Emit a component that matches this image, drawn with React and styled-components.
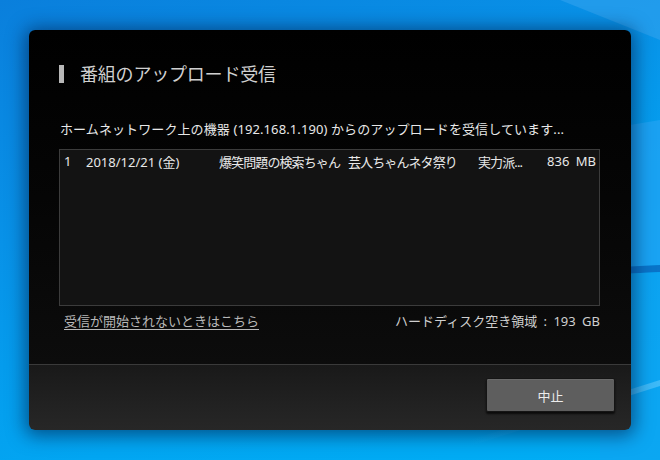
import React from "react";
import styled, { createGlobalStyle } from "styled-components";

const Global = createGlobalStyle`
  html, body { margin: 0; padding: 0; }
  body {
    width: 660px;
    height: 460px;
    overflow: hidden;
    font-family: "Noto Sans", "Noto Sans CJK JP", sans-serif;
    background: linear-gradient(160deg, #0a7fdc 0%, #0892e8 35%, #02a6f2 70%, #00aef5 100%);
  }
`;

const Desktop = styled.div`
  position: relative;
  width: 660px;
  height: 460px;
  padding: 30px 0 0 29px;
  box-sizing: border-box;
`;

const Beams = styled.svg`
  position: absolute;
  inset: 0;
  pointer-events: none;
`;

const Dialog = styled.div`
  position: relative;
  width: 602px;
  height: 400px;
  border-radius: 6px;
  overflow: hidden;
  display: flex;
  flex-direction: column;
  box-shadow: 0 2px 18px 4px rgba(0, 20, 60, 0.55);
`;

const Body = styled.div`
  height: 334px;
  box-sizing: border-box;
  padding: 35px 30px 0 30px;
  background: linear-gradient(to bottom, #000 0%, #050505 50%, #0c0c0c 100%);
  display: flex;
  flex-direction: column;
`;

const Title = styled.div`
  display: flex;
  align-items: center;
  gap: 16px;
  height: 18px;
`;

const TitleBar = styled.span`
  width: 5px;
  height: 18px;
  background: #b8b8b8;
`;

const TitleText = styled.h1`
  margin: 0;
  font-size: 18px;
  font-weight: 400;
  line-height: 18px;
  color: #d0d0d0;
  letter-spacing: -0.2px;
`;

const Message = styled.p`
  margin: 38px 0 0 1px;
  font-size: 13px;
  line-height: 16px;
  color: #e8e8e8;
  letter-spacing: 0.1px;
`;

const List = styled.div`
  margin-top: 12px;
  width: 541px;
  height: 157px;
  flex-shrink: 0;
  box-sizing: border-box;
  border: 1px solid #3c3c3c;
  background: #131313;
`;

const Row = styled.div`
  display: grid;
  grid-template-columns: 22px 133px 129px 130px 1fr auto;
  align-items: center;
  height: 20px;
  padding: 1px 3px 0 4px;
  font-size: 13px;
  color: #e8e8e8;
  white-space: nowrap;
`;

const Cell = styled.span`
  text-align: ${(p) => (p.$right ? "right" : "left")};
  word-spacing: ${(p) => (p.$wide ? "3px" : "0")};
  letter-spacing: ${(p) => (p.$tight ? "-0.9px" : "0")};
  overflow: hidden;
`;

const Bottom = styled.div`
  display: flex;
  justify-content: space-between;
  align-items: center;
  width: 541px;
  margin-top: 6px;
  padding: 0 0 0 5px;
  box-sizing: border-box;
  font-size: 13px;
  line-height: 18px;
`;

const HelpLink = styled.a`
  color: #b8b8b8;
  text-decoration: underline;
  text-underline-offset: 3px;
  cursor: pointer;
`;

const Disk = styled.span`
  color: #cfcfcf;
  word-spacing: 3px;
`;

const Footer = styled.div`
  flex: 1;
  border-top: 1px solid #3a3a3a;
  background: linear-gradient(to bottom, #191919, #272727);
  display: flex;
  justify-content: flex-end;
  align-items: flex-start;
  padding: 13px 16px 0 0;
`;

const Button = styled.button`
  width: 129px;
  height: 34px;
  background: #5e5e5e;
  border: 1px solid #151515;
  border-radius: 2px;
  box-shadow: 0 2px 2px rgba(0, 0, 0, 0.7), inset 0 1px 0 #6a6a6a;
  color: #ececec;
  font-family: "Noto Sans CJK JP", sans-serif;
  font-size: 13px;
  cursor: pointer;
`;

export default function App() {
  return (
    <>
      <Global />
      <Desktop>
        <Beams width="660" height="460" viewBox="0 0 660 460">
          <defs>
            <linearGradient id="b1" x1="0" y1="0" x2="1" y2="0">
              <stop offset="0" stopColor="#5fc8ff" stopOpacity="0" />
              <stop offset="1" stopColor="#7fd4ff" stopOpacity="0.45" />
            </linearGradient>
          </defs>
          <polygon points="560,0 660,0 660,40" fill="#3aa6f0" opacity="0.5" />
          <polygon points="600,130 660,120 660,265 620,268" fill="#1fa2f2" opacity="0.8" />
          <polygon points="600,268 660,265 660,272 600,275" fill="#0a6fc4" opacity="0.9" />
          <polygon points="600,275 660,272 660,460 600,460" fill="#16a0f0" opacity="0.5" />
          <polygon points="470,440 660,380 660,386 470,446" fill="url(#b1)" />
        </Beams>
        <Dialog>
          <Body>
            <Title>
              <TitleBar />
              <TitleText>番組のアップロード受信</TitleText>
            </Title>
            <Message>ホームネットワーク上の機器 (192.168.1.190) からのアップロードを受信しています...</Message>
            <List>
              <Row>
                <Cell>1</Cell>
                <Cell>2018/12/21 (金)</Cell>
                <Cell $tight>爆笑問題の検索ちゃん</Cell>
                <Cell $tight>芸人ちゃんネタ祭り</Cell>
                <Cell $tight>実力派...</Cell>
                <Cell $right $wide>836 MB</Cell>
              </Row>
            </List>
            <Bottom>
              <HelpLink>受信が開始されないときはこちら</HelpLink>
              <Disk>ハードディスク空き領域 : 193 GB</Disk>
            </Bottom>
          </Body>
          <Footer>
            <Button>中止</Button>
          </Footer>
        </Dialog>
      </Desktop>
    </>
  );
}
